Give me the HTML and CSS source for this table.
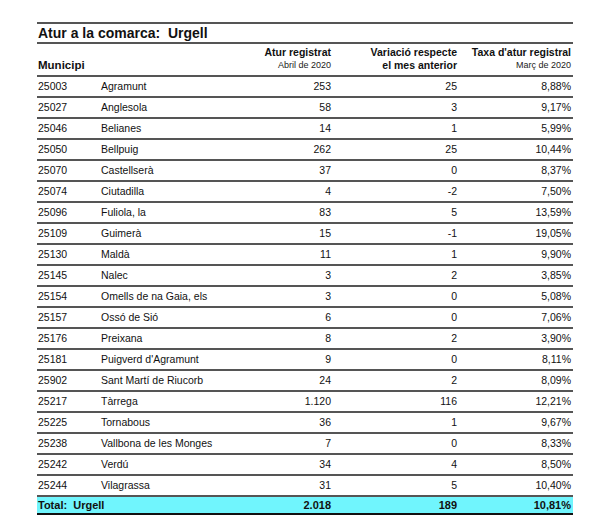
FILE: index.html
```html
<!DOCTYPE html>
<html lang="ca">
<head>
<meta charset="utf-8">
<title>Atur a la comarca: Urgell</title>
<link rel="stylesheet" href="styles.css">
</head>
<body>
<div class="report">
  <div class="title">Atur a la comarca:&nbsp; Urgell</div>
  <div class="row head">
    <div class="h-muni">Municipi</div>
    <div></div>
    <div class="num"><div class="hb">Atur registrat</div><div class="hs">Abril de 2020</div></div>
    <div class="num"><div class="hb">Variació respecte</div><div class="hb">el mes anterior</div></div>
    <div class="num last"><div class="hb">Taxa d'atur registral</div><div class="hs">Març de 2020</div></div>
  </div>
  <div class="row"><div>25003</div><div>Agramunt</div><div class="num">253</div><div class="num">25</div><div class="num last">8,88%</div></div>
  <div class="row"><div>25027</div><div>Anglesola</div><div class="num">58</div><div class="num">3</div><div class="num last">9,17%</div></div>
  <div class="row"><div>25046</div><div>Belianes</div><div class="num">14</div><div class="num">1</div><div class="num last">5,99%</div></div>
  <div class="row"><div>25050</div><div>Bellpuig</div><div class="num">262</div><div class="num">25</div><div class="num last">10,44%</div></div>
  <div class="row"><div>25070</div><div>Castellserà</div><div class="num">37</div><div class="num">0</div><div class="num last">8,37%</div></div>
  <div class="row"><div>25074</div><div>Ciutadilla</div><div class="num">4</div><div class="num">-2</div><div class="num last">7,50%</div></div>
  <div class="row"><div>25096</div><div>Fuliola, la</div><div class="num">83</div><div class="num">5</div><div class="num last">13,59%</div></div>
  <div class="row"><div>25109</div><div>Guimerà</div><div class="num">15</div><div class="num">-1</div><div class="num last">19,05%</div></div>
  <div class="row"><div>25130</div><div>Maldà</div><div class="num">11</div><div class="num">1</div><div class="num last">9,90%</div></div>
  <div class="row"><div>25145</div><div>Nalec</div><div class="num">3</div><div class="num">2</div><div class="num last">3,85%</div></div>
  <div class="row"><div>25154</div><div>Omells de na Gaia, els</div><div class="num">3</div><div class="num">0</div><div class="num last">5,08%</div></div>
  <div class="row"><div>25157</div><div>Ossó de Sió</div><div class="num">6</div><div class="num">0</div><div class="num last">7,06%</div></div>
  <div class="row"><div>25176</div><div>Preixana</div><div class="num">8</div><div class="num">2</div><div class="num last">3,90%</div></div>
  <div class="row"><div>25181</div><div>Puigverd d'Agramunt</div><div class="num">9</div><div class="num">0</div><div class="num last">8,11%</div></div>
  <div class="row"><div>25902</div><div>Sant Martí de Riucorb</div><div class="num">24</div><div class="num">2</div><div class="num last">8,09%</div></div>
  <div class="row"><div>25217</div><div>Tàrrega</div><div class="num">1.120</div><div class="num">116</div><div class="num last">12,21%</div></div>
  <div class="row"><div>25225</div><div>Tornabous</div><div class="num">36</div><div class="num">1</div><div class="num last">9,67%</div></div>
  <div class="row"><div>25238</div><div>Vallbona de les Monges</div><div class="num">7</div><div class="num">0</div><div class="num last">8,33%</div></div>
  <div class="row"><div>25242</div><div>Verdú</div><div class="num">34</div><div class="num">4</div><div class="num last">8,50%</div></div>
  <div class="row"><div>25244</div><div>Vilagrassa</div><div class="num">31</div><div class="num">5</div><div class="num last">10,40%</div></div>
  <div class="row total"><div class="tot-label">Total:&nbsp; Urgell</div><div class="num">2.018</div><div class="num">189</div><div class="num last">10,81%</div></div>
</div>
</body>
</html>
```
FILE: styles.css
```css
html, body {
  margin: 0;
  padding: 0;
  background: #ffffff;
}
body {
  font-family: "Liberation Sans", Arial, sans-serif;
  color: #111111;
}
.report {
  width: 536px;
  margin: 22px 0 0 37px;
}
.title {
  box-sizing: border-box;
  height: 22px;
  border-top: 2px solid #555555;
  border-bottom: 2px solid #555555;
  font-size: 14px;
  font-weight: bold;
  line-height: 18px;
  padding-left: 1px;
}
.row {
  display: grid;
  grid-template-columns: 64px 130px 100px 126px 116px;
  box-sizing: border-box;
  height: 21px;
  border-bottom: 2px solid #555555;
  font-size: 10.5px;
  line-height: 19px;
  align-items: center;
}
.row > div:first-child {
  padding-left: 1px;
}
.row > div {
  white-space: nowrap;
}
.num {
  text-align: right;
}
.num.last {
  padding-right: 2px;
}
.head {
  height: 33px;
  align-items: end;
  padding-bottom: 4px;
}
.head .num {
  align-self: start;
  padding-top: 2px;
}
.h-muni {
  font-size: 11.5px;
  font-weight: bold;
  line-height: 14px;
}
.hb {
  font-size: 10.5px;
  font-weight: bold;
  line-height: 13px;
}
.hs {
  font-size: 9px;
  line-height: 12px;
  color: #222222;
}
.total {
  height: 18px;
  background: #70f5fd;
  border-bottom: 2px solid #111111;
  font-weight: bold;
  line-height: 16px;
  font-size: 11px;
}
.tot-label {
  grid-column: 1 / 3;
}
```
